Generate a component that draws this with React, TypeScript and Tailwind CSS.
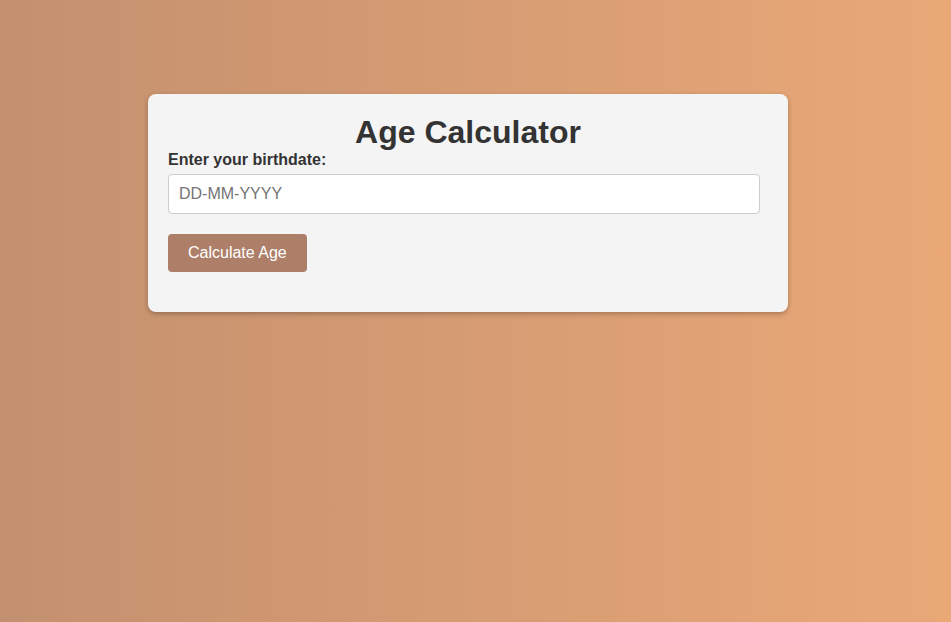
import React from "react";

export default function App() {
  return (
    <div
      className="w-full h-[622px] bg-gradient-to-r from-[#c3906f] to-[#eaa877] pt-[94px] pl-[148px]"
      style={{ fontFamily: '"Liberation Sans", Arial, sans-serif' }}
    >
      <div className="w-[640px] bg-[#f4f4f4] rounded-lg p-5 shadow-[0_2px_5px_rgba(0,0,0,0.25)]">
        <h1 className="text-[32px] leading-[36.8px] font-bold text-[#333] text-center m-0">
          Age Calculator
        </h1>
        <label className="block text-[16px] leading-[18.4px] font-bold text-[#333] mb-[5px]">
          Enter your birthdate:
        </label>
        <input
          type="text"
          placeholder="DD-MM-YYYY"
          className="block w-[592px] h-[40px] px-[10px] text-[16px] bg-white border border-[#ccc] rounded-[4px] text-[#333] placeholder:text-[#757575] outline-none mb-5"
        />
        <button className="block h-[38px] px-5 bg-[#ad7f68] text-white text-[16px] leading-[18px] rounded-[4px] mb-5">
          Calculate Age
        </button>
      </div>
    </div>
  );
}
